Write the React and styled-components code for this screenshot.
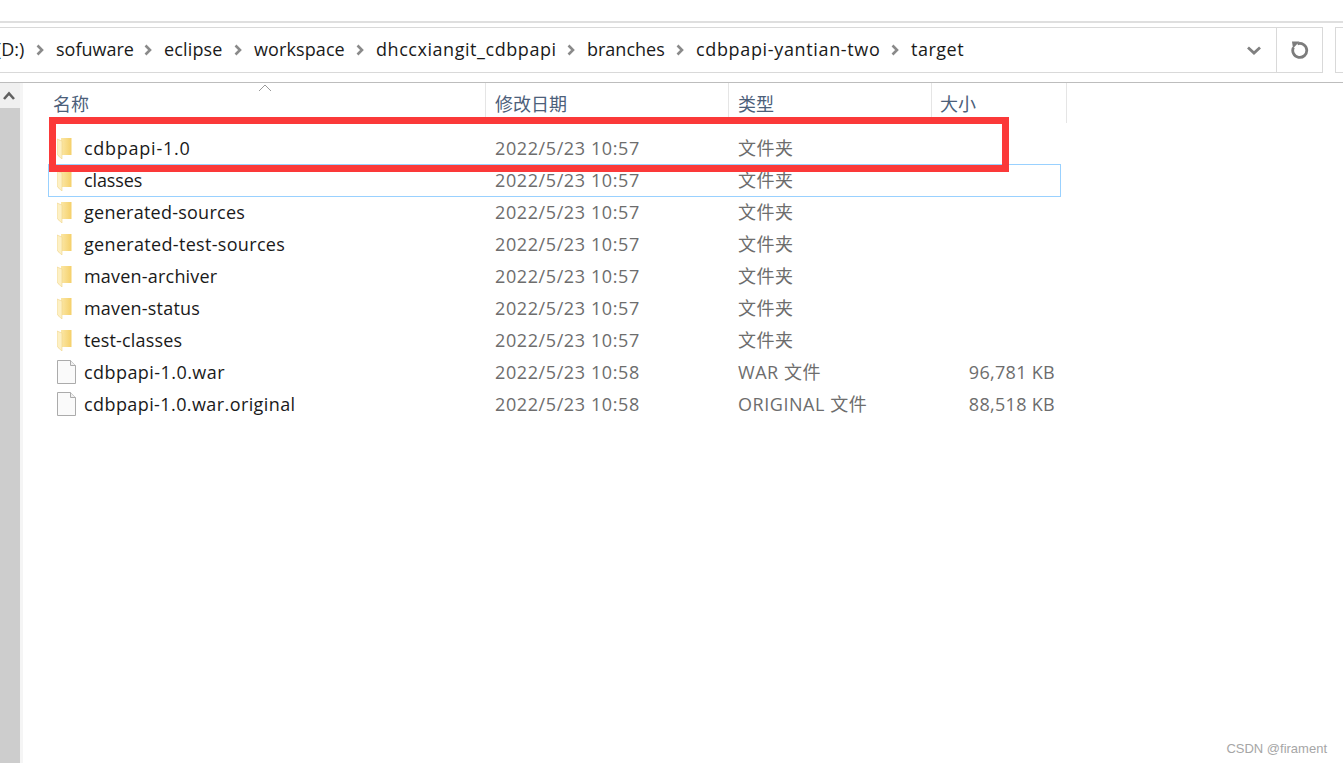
import React from "react";
import styled, { createGlobalStyle } from "styled-components";

const Global = createGlobalStyle`
  html, body { margin: 0; padding: 0; background: #fff; overflow: hidden; }
  body { font-family: "Open Sans", "Noto Sans CJK SC", sans-serif; }
`;
const Page = styled.div`
  position: relative; width: 1343px; height: 763px; background: #fff; overflow: hidden;
  display: flex; flex-direction: column;
`;
const TopStrip = styled.div`height: 21px; border-bottom: 2px solid #dfdfdf; flex: none;`;
const Toolbar = styled.div`
  height: 60px; flex: none; display: flex; padding-top: 4px; box-sizing: border-box;
  border-bottom: 1px solid #bdbdbd;
`;
const AddressBox = styled.div`
  width: 1323px; height: 46px; box-sizing: border-box; flex: none;
  border: 1px solid #d9d9d9; border-left: 0; display: flex; align-items: center; overflow: hidden;
`;
const Crumbs = styled.div`
  flex: 1; display: flex; align-items: center; min-width: 0; overflow: hidden;
  font-size: 18px; color: #1a1a1a; padding-bottom: 3px;
`;
const Crumb = styled.span`
  width: ${p => p.$w}px; flex: none; white-space: nowrap;
  letter-spacing: ${p => p.$ls || 0}px; margin-left: ${p => p.$ml || 0}px;
`;
const Sep = styled.svg`width: 8px; height: 12px; flex: none; margin: 3px 12px 0 0;`;
const DropArea = styled.div`width: 44px; display: flex; justify-content: center; align-items: center; height: 100%;`;
const RefreshBtn = styled.div`
  width: 46px; height: 100%; box-sizing: border-box; border-left: 1px solid #d9d9d9;
  display: flex; align-items: center; justify-content: center;
`;
const SearchStub = styled.div`
  width: 8px; height: 46px; margin-left: 12px; border: 1px solid #d9d9d9; border-right: 0; box-sizing: border-box; flex: none;
`;
const Body = styled.div`flex: 1; display: flex; min-height: 0;`;
const ScrollBar = styled.div`width: 20px; flex: none; background: #cdcdcd; display: flex; flex-direction: column;`;
const ScrollUp = styled.div`
  height: 25px; background: #f0f0f0; display: flex; align-items: center; padding-left: 3px;
`;
const Gutter = styled.div`width: 3px; flex: none; background: #f5f5f5;`;
const List = styled.div`flex: 1; padding-left: 25px; position: relative;`;
const HeaderRow = styled.div`display: flex; height: 40px; position: relative;`;
const HeadCell = styled.div`
  width: ${p => p.$w}px; box-sizing: border-box; padding: 8px 0 0 ${p => p.$pad}px; font-size: 18px; line-height: 24px;
  color: #4c607a; border-right: 1px solid #e5e5e5; flex: none;
  font-family: "Noto Sans CJK SC", sans-serif;
`;
const SortMark = styled.svg`position: absolute; left: 210px; top: 1px; width: 14px; height: 8px;`;
const Row = styled.div`
  position: relative; display: flex; height: 32px; align-items: center; width: 1013px; box-sizing: border-box;
  margin-top: ${p => p.$first ? 9 : 0}px; font-size: 18px; border: 1px solid transparent;
  ${p => p.$focus ? `
    &::after {
      content: ""; position: absolute; inset: -1px -1px -2px -1px; border: 1px solid #99d1ff; pointer-events: none;
    }
  ` : ""}
`;
const NameCell = styled.div`
  width: 446px; flex: none; display: flex; align-items: center; color: #1a1a1a; white-space: nowrap;
`;
const NameText = styled.span`letter-spacing: ${p => p.$ls}px;`;
const IconWrap = styled.div`width: 27px; margin-left: 8px; flex: none; display: flex; align-items: center;`;
const DateCell = styled.div`width: 243px; flex: none; color: #6d6d6d; white-space: nowrap; letter-spacing: .6px;`;
const TypeCell = styled.div`
  width: 203px; flex: none; box-sizing: border-box; padding-bottom: 2px; color: #6d6d6d; white-space: nowrap; letter-spacing: .55px;
`;
const SizeCell = styled.div`flex: 1; text-align: right; padding-right: 5px; color: #6d6d6d; white-space: nowrap; letter-spacing: .3px;`;
const RedBox = styled.div`
  position: absolute; left: 49px; top: 117px; width: 960px; height: 55px; box-sizing: border-box;
  border: 7px solid #fb3939;
`;
const Watermark = styled.div`
  position: absolute; right: 16px; bottom: 7px; font-size: 13px; color: #a6a6a6; font-family: "Liberation Sans", sans-serif;
`;

const Chevron = () => (
  <Sep viewBox="0 0 8 12"><path d="M1.5 1.5 6 6l-4.5 4.5" fill="none" stroke="#8a8a8a" strokeWidth="2.6" /></Sep>
);
const FolderIcon = () => (
  <svg width="15" height="21" viewBox="0 0 15 21">
    <defs>
      <linearGradient id="fg" x1="0" y1="0" x2="1" y2="0">
        <stop offset="0" stopColor="#fbe7a6" /><stop offset="1" stopColor="#f5d06a" />
      </linearGradient>
    </defs>
    <path d="M4 0h10.5v17H4z" fill="url(#fg)" />
    <path d="M0 1 5 3v18L1 17.5 0 16z" fill="#fdf0c4" stroke="#f0d488" strokeWidth=".6" />
  </svg>
);
const FileIcon = () => (
  <svg width="19" height="24" viewBox="0 0 19 24">
    <path d="M.5.5h13l5 5v18H.5z" fill="#fafafa" stroke="#ababab" />
    <path d="M13.5.5v5h5" fill="#f0f0f0" stroke="#ababab" />
  </svg>
);

const rows = [
  { name: "cdbpapi-1.0", ls: 0.74, date: "2022/5/23 10:57", type: "文件夹", size: "", kind: "folder" },
  { name: "classes", ls: -0.12, date: "2022/5/23 10:57", type: "文件夹", size: "", kind: "folder", focus: true },
  { name: "generated-sources", ls: 0.25, date: "2022/5/23 10:57", type: "文件夹", size: "", kind: "folder" },
  { name: "generated-test-sources", ls: 0.32, date: "2022/5/23 10:57", type: "文件夹", size: "", kind: "folder" },
  { name: "maven-archiver", ls: 0.2, date: "2022/5/23 10:57", type: "文件夹", size: "", kind: "folder" },
  { name: "maven-status", ls: 0.2, date: "2022/5/23 10:57", type: "文件夹", size: "", kind: "folder" },
  { name: "test-classes", ls: 0.15, date: "2022/5/23 10:57", type: "文件夹", size: "", kind: "folder" },
  { name: "cdbpapi-1.0.war", ls: 0.44, date: "2022/5/23 10:58", type: "WAR 文件", size: "96,781 KB", kind: "file" },
  { name: "cdbpapi-1.0.war.original", ls: 0.41, date: "2022/5/23 10:58", type: "ORIGINAL 文件", size: "88,518 KB", kind: "file" },
];
const crumbs = [
  { t: "(D:)", w: 40, ml: -4 },
  { t: "sofuware", w: 88 },
  { t: "eclipse", w: 70, ls: 0.15 },
  { t: "workspace", w: 102, ls: 0.1 },
  { t: "dhccxiangit_cdbpapi", w: 191, ls: 0.55 },
  { t: "branches", w: 89 },
  { t: "cdbpapi-yantian-two", w: 195, ls: 0.65 },
  { t: "target", w: 60, ls: 0.5 },
];

export default function App() {
  return (
    <Page>
      <Global />
      <TopStrip />
      <Toolbar>
        <AddressBox>
          <Crumbs>
            {crumbs.map((c, i) => (
              <React.Fragment key={c.t}>
                <Crumb $w={c.w} $ls={c.ls} $ml={c.ml}>{c.t}</Crumb>
                {i < crumbs.length - 1 && <Chevron />}
              </React.Fragment>
            ))}
          </Crumbs>
          <DropArea>
            <svg width="14" height="9" viewBox="0 0 14 9"><path d="M1 1.5 7 7l6-5.5" fill="none" stroke="#808080" strokeWidth="2.8" /></svg>
          </DropArea>
          <RefreshBtn>
            <svg width="18" height="20" viewBox="0 0 18 20">
              <path d="M6.5 3.8A7 7 0 1 1 2.4 7.5" fill="none" stroke="#7c7c7c" strokeWidth="2.8" />
              <path d="M1 1.5h7.5L2 8.5z" fill="#7c7c7c" />
            </svg>
          </RefreshBtn>
        </AddressBox>
        <SearchStub />
      </Toolbar>
      <Body>
        <ScrollBar>
          <ScrollUp>
            <svg width="12" height="9" viewBox="0 0 12 9"><path d="M1 8 6 2.5 11 8" fill="none" stroke="#606060" strokeWidth="2.6" /></svg>
          </ScrollUp>
        </ScrollBar>
        <Gutter />
        <List>
          <HeaderRow>
            <HeadCell $w={438} $pad={5}>名称</HeadCell>
            <HeadCell $w={243} $pad={9}>修改日期</HeadCell>
            <HeadCell $w={203} $pad={9}>类型</HeadCell>
            <HeadCell $w={135} $pad={8}>大小</HeadCell>
            <SortMark viewBox="0 0 14 8"><path d="M1 7 7 1l6 6" fill="none" stroke="#9a9a9a" strokeWidth="1" /></SortMark>
          </HeaderRow>
          {rows.map((r, i) => (
            <Row key={r.name} $first={i === 0} $focus={r.focus}>
              <NameCell>
                <IconWrap>{r.kind === "folder" ? <FolderIcon /> : <FileIcon />}</IconWrap>
                <NameText $ls={r.ls}>{r.name}</NameText>
              </NameCell>
              <DateCell>{r.date}</DateCell>
              <TypeCell>{r.type}</TypeCell>
              <SizeCell>{r.size}</SizeCell>
            </Row>
          ))}
        </List>
      </Body>
      <RedBox />
      <Watermark>CSDN @firament</Watermark>
    </Page>
  );
}
